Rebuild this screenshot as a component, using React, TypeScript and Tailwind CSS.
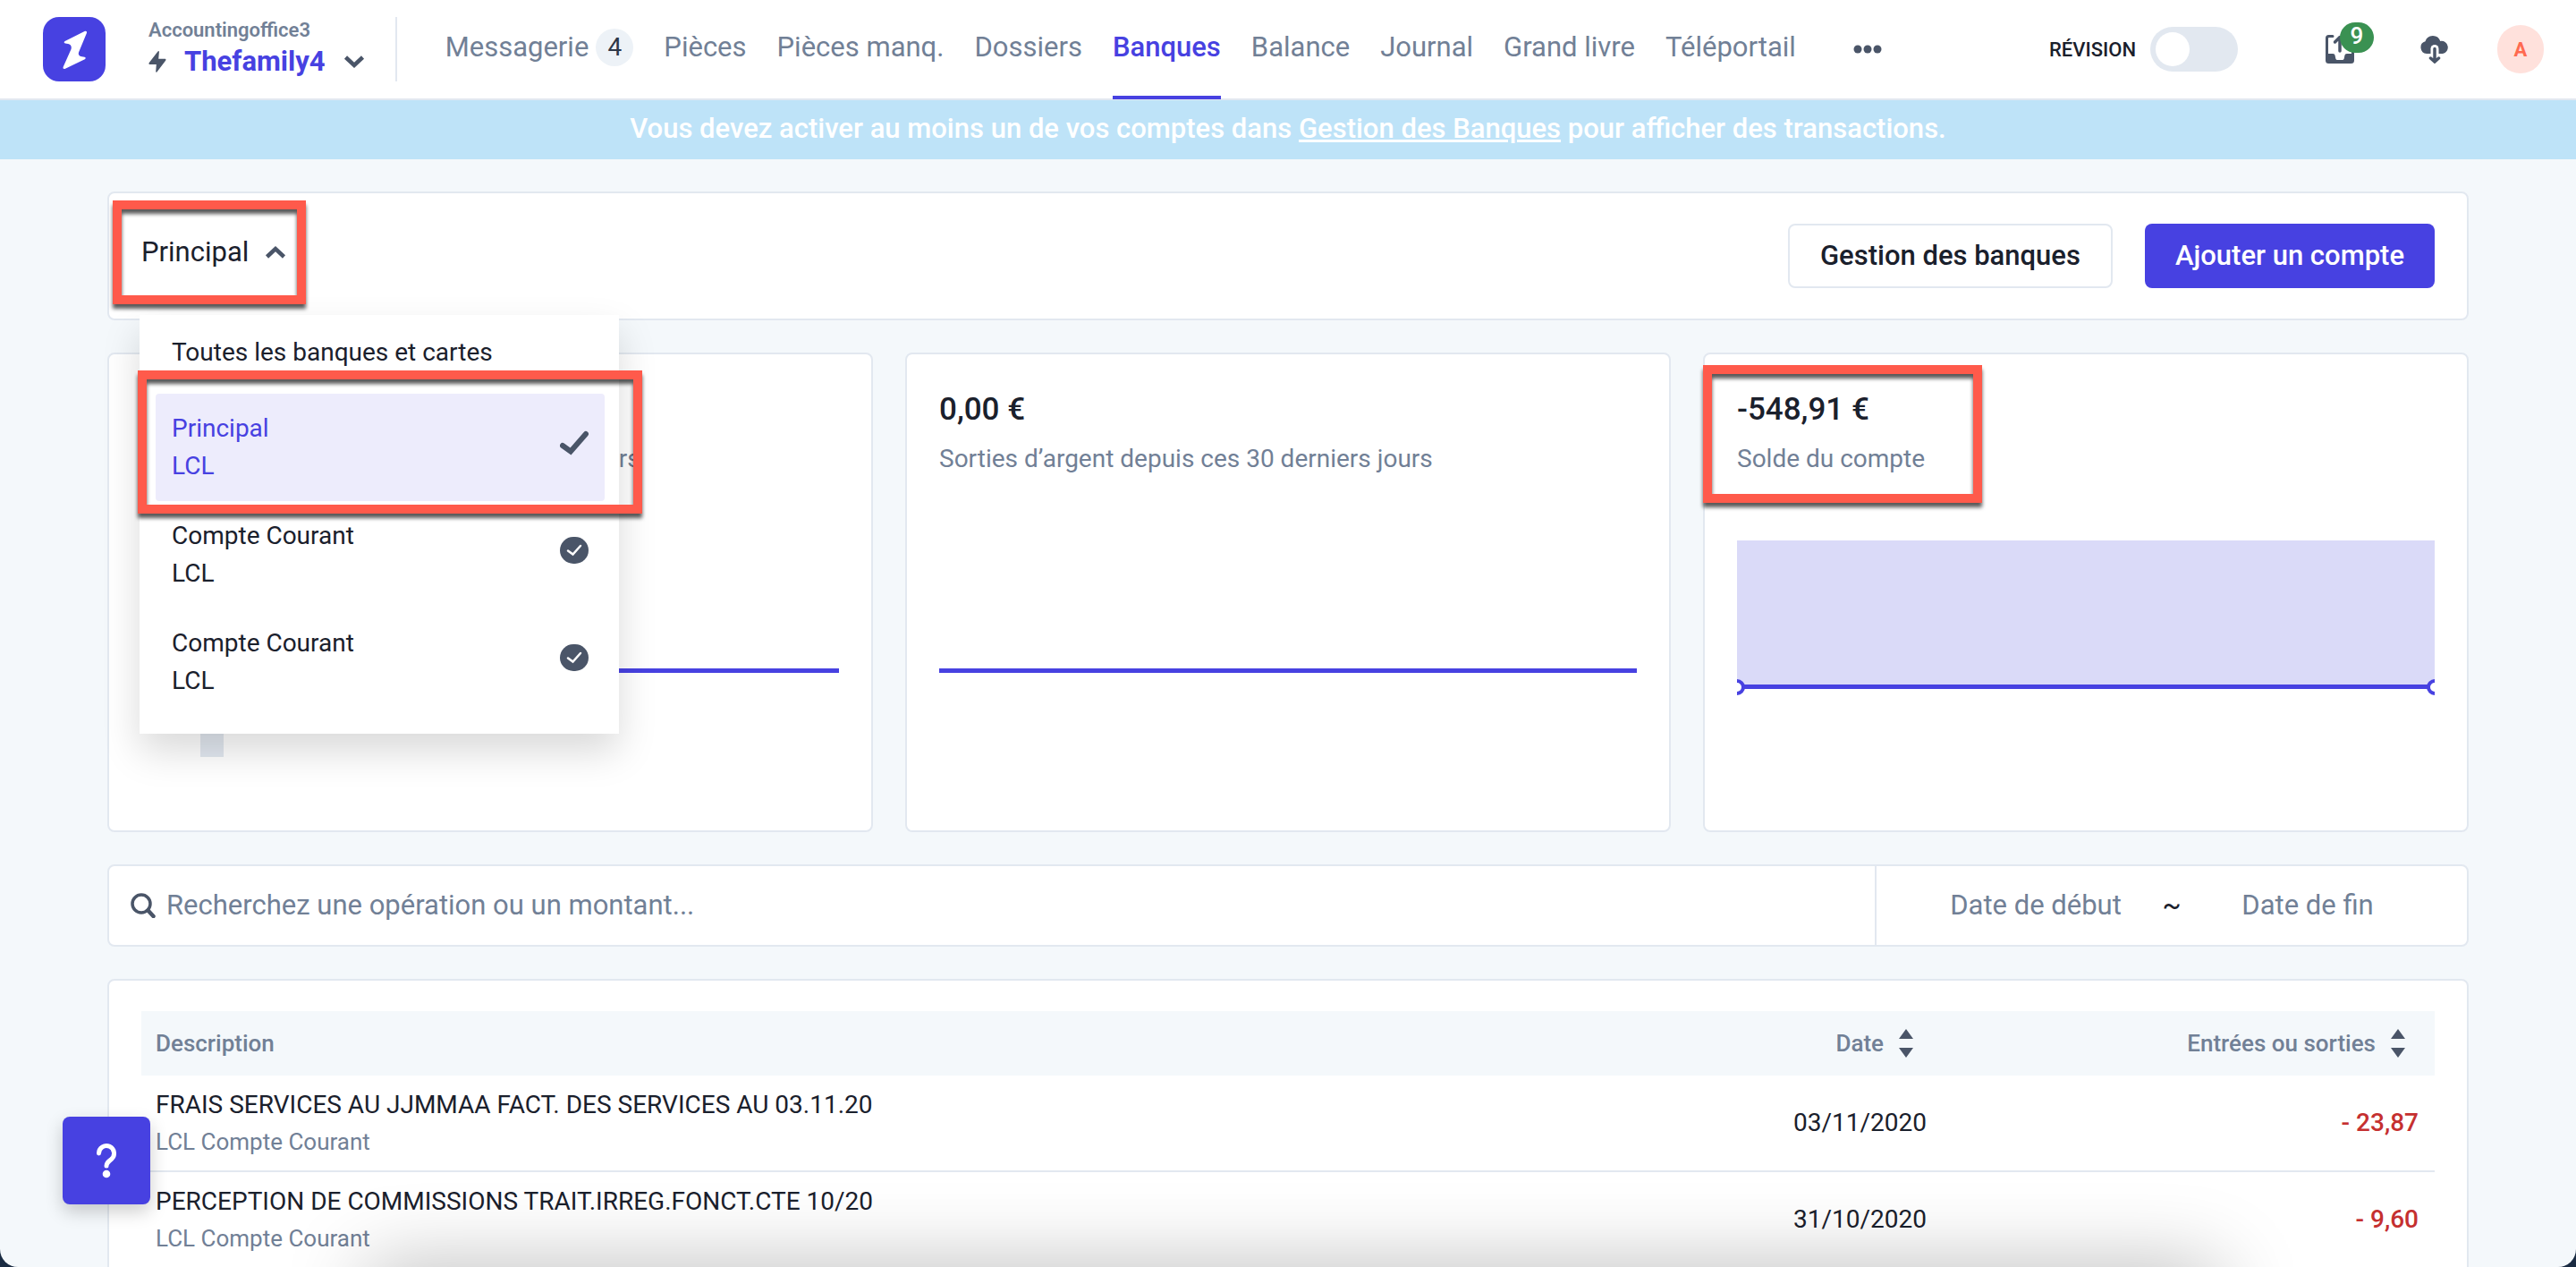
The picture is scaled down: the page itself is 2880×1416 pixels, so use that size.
import type { ReactNode } from "react";
import clsx from "clsx";

const navLinks = [
  { label: "Messagerie", count: 4 },
  { label: "Pièces" },
  { label: "Pièces manq." },
  { label: "Dossiers" },
  { label: "Banques", active: true },
  { label: "Balance" },
  { label: "Journal" },
  { label: "Grand livre" },
  { label: "Téléportail" },
];

const accounts = [
  { name: "Principal", bank: "LCL", selected: true },
  { name: "Compte Courant", bank: "LCL", selected: false },
  { name: "Compte Courant", bank: "LCL", selected: false },
];

const transactions = [
  {
    label: "FRAIS SERVICES AU JJMMAA FACT. DES SERVICES AU 03.11.20",
    account: "LCL Compte Courant",
    date: "03/11/2020",
    amount: "- 23,87",
  },
  {
    label: "PERCEPTION DE COMMISSIONS TRAIT.IRREG.FONCT.CTE 10/20",
    account: "LCL Compte Courant",
    date: "31/10/2020",
    amount: "- 9,60",
  },
];

function Logo() {
  return (
    <svg viewBox="0 0 70 72" className="w-[70px] h-[72px]" aria-hidden="true">
      <rect width="70" height="72" rx="18" fill="#4741e1" />
      <path
        d="M46.5 16c1.800-.7 3 .3 2.400 2L40 39.500c-.8 2.500.8 4.500 3.500 4.800l3 .4c1.600.3 1.700 1.700.3 2.500L25 57.800c-1.800.8-3-.3-2.300-2L31.500 36c1-3-.5-5.500-3.500-6l-3-.5c-1.700-.4-1.800-1.800-.4-2.500z"
        fill="#fff"
      />
    </svg>
  );
}

function BoltIcon() {
  return (
    <svg viewBox="0 0 20 24" className="w-5 h-6" aria-hidden="true">
      <path
        d="M10.500.6C11.200-.3 12 0 11.900 1L11.200 8.800h7c1.300 0 1.600 1 .9 1.900L9.600 23.300c-.7.900-1.500.600-1.400-.4L8.800 15H1.600C.4 15 .1 14 .8 13.100z"
        fill="#4a5568"
      />
    </svg>
  );
}

function Chevron({ up }: { up?: boolean }) {
  return (
    <svg viewBox="0 0 24 16" className={clsx("w-6 h-4", up && "rotate-180")} aria-hidden="true">
      <path d="M2.500 3 L12 12 L21.500 3" fill="none" stroke="#4a5568" strokeWidth="4.500" />
    </svg>
  );
}

function DotsIcon() {
  return (
    <svg viewBox="0 0 32 10" className="w-8 h-[10px]" aria-hidden="true">
      <circle cx="5" cy="5" r="4.500" fill="#4a5568" />
      <circle cx="16" cy="5" r="4.500" fill="#4a5568" />
      <circle cx="27" cy="5" r="4.500" fill="#4a5568" />
    </svg>
  );
}

function OutboxIcon() {
  return (
    <svg viewBox="0 0 32 32" className="w-8 h-8" aria-hidden="true">
      <path
        d="M8 0a1.500 1.500 0 0 1 0 3H4a1 1 0 0 0-1 1v17h5c2 0 2.500 1 2.800 3l.4 2c.3 1.500 1 2 2.200 2h5.200c1.200 0 1.900-.5 2.200-2l.4-2c.3-2 .8-3 2.800-3h5V4a1 1 0 0 0-1-1h-4a1.500 1.500 0 0 1 0-3h4.500A3.500 3.500 0 0 1 32 3.500v25a3.500 3.500 0 0 1-3.500 3.500h-25A3.500 3.500 0 0 1 0 28.500v-25A3.500 3.500 0 0 1 3.500 0z"
        fill="#4a5568"
      />
      <path
        d="M16 18V4M10.500 8 L16 2.500 L21.500 8"
        fill="none"
        stroke="#4a5568"
        strokeWidth="3.500"
        strokeLinecap="round"
        strokeLinejoin="round"
      />
    </svg>
  );
}

function CloudDownloadIcon() {
  return (
    <svg viewBox="0 0 32 32" className="w-8 h-8" aria-hidden="true">
      <path
        d="M7 21a7 7 0 0 1-1.500-13.700A8.800 8.800 0 0 1 22.300 7 7 7 0 0 1 25 21z"
        fill="#4a5568"
      />
      <path d="M16 22V15.500" stroke="#fff" strokeWidth="9" strokeLinecap="round" />
      <path
        d="M16 15.500V29M11.500 26 L16 30 L20.500 26"
        fill="none"
        stroke="#4a5568"
        strokeWidth="3.500"
        strokeLinecap="round"
      />
    </svg>
  );
}

function CheckIcon() {
  return (
    <svg viewBox="0 0 32 28" className="w-8 h-7" aria-hidden="true">
      <path
        d="M3 17 L12 23.500 L29 4"
        fill="none"
        stroke="#4a5568"
        strokeWidth="6"
        strokeLinecap="round"
      />
    </svg>
  );
}

function CheckCircleIcon() {
  return (
    <svg viewBox="0 0 32 30" className="w-8 h-[30px]" aria-hidden="true">
      <rect width="32" height="30" rx="15" fill="#4a5568" />
      <path
        d="M9 15.500 L14.500 19.500 L23 10"
        fill="none"
        stroke="#fff"
        strokeWidth="2.500"
        strokeLinecap="round"
      />
    </svg>
  );
}

function SearchIcon() {
  return (
    <svg viewBox="0 0 28 28" className="w-7 h-7" aria-hidden="true">
      <circle cx="12" cy="12" r="10" fill="none" stroke="#4a5568" strokeWidth="3.500" />
      <path d="M19.500 19.500 L25.500 26" stroke="#4a5568" strokeWidth="4.500" strokeLinecap="round" />
    </svg>
  );
}

function SortIcon() {
  return (
    <svg viewBox="0 0 18 32" className="w-[18px] h-8" aria-hidden="true">
      <path d="M9 0 L17 11 H1z M1 21 H17 L9 32z" fill="#4a5568" />
    </svg>
  );
}

// Red frame used to point at an element of the page
function Highlight({ className }: { className: string }) {
  return (
    <span
      className={clsx(
        "absolute z-30 pointer-events-none border-[10px] border-[#ff5a4b] drop-shadow-[0_5px_2px_rgba(0,0,0,0.65)]",
        className
      )}
    />
  );
}

function StatCard({
  amount,
  label,
  highlight,
  children,
}: {
  amount: string;
  label: string;
  highlight?: boolean;
  children: ReactNode;
}) {
  return (
    <section className="relative bg-white border-2 border-[#e2e8f0] rounded-lg p-9">
      {highlight && <Highlight className="-left-0.5 top-3 w-[312px] h-[154px]" />}
      <p className="text-[35px] leading-[52px] font-medium">{amount}</p>
      <p className="mt-2.5 text-[28px] leading-[38px] text-[#718096]">{label}</p>
      <svg className="block w-full h-[360px]" aria-hidden="true">
        {children}
      </svg>
    </section>
  );
}

function Header() {
  return (
    <header className="h-28 flex items-center bg-white border-b-2 border-[#e2e8f0] pl-12 pr-9">
      <a href="#accueil" aria-label="Accueil">
        <Logo />
      </a>
      <button type="button" className="ml-12 text-left">
        <span className="block text-[22px] leading-7 font-semibold text-[#718096]">
          Accountingoffice3
        </span>
        <span className="flex items-center text-[31px] leading-[42px] font-bold text-[#4741e1]">
          <BoltIcon />
          <span className="ml-5 mr-5">Thefamily4</span>
          <Chevron />
        </span>
      </button>
      <div className="w-0.5 h-[72px] ml-[34px] mr-[54px] bg-[#e2e8f0]" />

      <nav className="flex gap-[34px] text-[31px] text-[#718096]">
        {navLinks.map((link) => (
          <a
            key={link.label}
            href="#"
            className={clsx(
              "h-28 flex items-center gap-2 border-b-4 whitespace-nowrap",
              link.active
                ? "border-[#4741e1] text-[#4741e1] font-medium"
                : "border-transparent"
            )}
          >
            {link.label}
            {link.count && (
              <span className="w-[42px] h-[42px] rounded-full bg-[#edf2f7] text-[#2d3748] text-[28px] flex items-center justify-center">
                {link.count}
              </span>
            )}
          </a>
        ))}
      </nav>
      <button type="button" className="ml-16" aria-label="Plus">
        <DotsIcon />
      </button>

      <div className="ml-auto flex items-center">
        <label className="flex items-center gap-4 text-[22px] font-medium">
          RÉVISION
          <input type="checkbox" className="sr-only" />
          <span className="w-[98px] h-[50px] rounded-full bg-[#e2e8f0] p-1.5">
            <span className="block w-[38px] h-[38px] rounded-full bg-white" />
          </span>
        </label>
        <button type="button" className="relative ml-[98px]" aria-label="Exports">
          <OutboxIcon />
          <span className="absolute left-4 -top-3.5 w-[38px] h-[34px] rounded-full bg-[#3a9152] text-white text-[26px] leading-[30px] font-medium">
            9
          </span>
        </button>
        <button type="button" className="ml-[74px]" aria-label="Téléchargements">
          <CloudDownloadIcon />
        </button>
        <button
          type="button"
          className="ml-[54px] w-[52px] h-[54px] rounded-full bg-[#ffe1dc] text-[#ff6a50] text-[22px] font-bold"
        >
          A
        </button>
      </div>
    </header>
  );
}

function AccountMenu() {
  return (
    <ul className="absolute z-20 left-[34px] top-[136px] w-[536px] pb-5 pl-[18px] pr-4 bg-white text-[28px] leading-[42px] shadow-[0_20px_40px_rgba(0,0,0,0.15)]">
      <li className="mb-1">
        <button type="button" className="w-full h-21 px-[18px] text-left">
          Toutes les banques et cartes
        </button>
      </li>
      {accounts.map((account, i) => (
        <li key={i} className="relative">
          {account.selected && (
            <Highlight className="-left-5 -right-[42px] -top-[26px] -bottom-3.5" />
          )}
          <button
            type="button"
            className={clsx(
              "w-full h-30 px-[18px] flex items-center justify-between rounded text-left",
              account.selected && "bg-[#edecfc] text-[#4741e1]"
            )}
          >
            <span>
              <span className="block">{account.name}</span>
              <span className="block">{account.bank}</span>
            </span>
            <span className="pb-2.5">
              {account.selected ? <CheckIcon /> : <CheckCircleIcon />}
            </span>
          </button>
        </li>
      ))}
    </ul>
  );
}

function Toolbar() {
  return (
    <section className="relative h-36 flex items-center bg-white border-2 border-[#e2e8f0] rounded-lg px-9">
      <div className="relative mb-2">
        <button
          type="button"
          aria-expanded="true"
          className="flex items-center gap-[18px] text-[31px] leading-11"
        >
          Principal
          <Chevron up />
        </button>
        <Highlight className="-left-8 -right-[22px] -inset-y-9" />
      </div>
      <AccountMenu />
      <div className="ml-auto flex gap-9 text-[31px] font-medium">
        <button type="button" className="h-18 px-[34px] border-2 border-[#e2e8f0] rounded-lg">
          Gestion des banques
        </button>
        <button type="button" className="h-18 px-[34px] rounded-lg bg-[#4741e1] text-white">
          Ajouter un compte
        </button>
      </div>
    </section>
  );
}

function SearchBar() {
  return (
    <section className="h-23 flex bg-white border-2 border-[#e2e8f0] rounded-lg text-[31px]">
      <label className="flex-1 flex items-center gap-3 pl-6">
        <SearchIcon />
        <input
          type="text"
          aria-label="Recherche"
          placeholder="Recherchez une opération ou un montant..."
          className="flex-1 outline-none placeholder:text-[#718096]"
        />
      </label>
      <div className="w-[662px] flex items-center justify-center border-l-2 border-[#e2e8f0]">
        <input
          type="text"
          aria-label="Date de début"
          placeholder="Date de début"
          className="w-60 text-center outline-none placeholder:text-[#718096]"
        />
        <span className="w-16 text-center">~</span>
        <input
          type="text"
          aria-label="Date de fin"
          placeholder="Date de fin"
          className="w-60 text-center outline-none placeholder:text-[#718096]"
        />
      </div>
    </section>
  );
}

function Transactions() {
  return (
    <section className="bg-white border-2 border-[#e2e8f0] rounded-lg px-9 pt-[34px] pb-9">
      <table className="w-full border-collapse">
        <thead>
          <tr className="h-18 bg-[#f4f8fb] text-[26px] text-[#718096]">
            <th className="px-4 text-left font-medium">Description</th>
            <th className="w-[550px] px-[18px] font-medium">
              <button type="button" className="ml-auto mr-3.5 flex items-center gap-4">
                Date
                <SortIcon />
              </button>
            </th>
            <th className="w-[550px] px-[18px] font-medium">
              <button type="button" className="ml-auto mr-3.5 flex items-center gap-4">
                Entrées ou sorties
                <SortIcon />
              </button>
            </th>
          </tr>
        </thead>
        <tbody>
          {transactions.map((t) => (
            <tr key={t.label} className="border-b-2 border-[#e2e8f0] text-[28px]">
              <td className="px-4 py-3">
                <div className="leading-[42px]">{t.label}</div>
                <div className="text-[26px] leading-10 text-[#718096]">{t.account}</div>
              </td>
              <td className="px-[18px] text-right">{t.date}</td>
              <td className="px-[18px] text-right font-medium text-[#c53030]">{t.amount}</td>
            </tr>
          ))}
        </tbody>
      </table>
    </section>
  );
}

export default function App() {
  return (
    <div className="h-screen bg-[#1a2b42]">
      <div className="relative h-full overflow-hidden rounded-b-[20px] bg-[#f4f8fb] text-[#1a202c] font-['Roboto',sans-serif]">
        <Header />
        <div className="h-[66px] pb-0.5 flex items-center justify-center bg-[#bee3f8] text-white text-[31px] font-medium">
          <p>
            Vous devez activer au moins un de vos comptes dans{" "}
            <a href="#gestion" className="underline">
              Gestion des Banques
            </a>{" "}
            pour afficher des transactions.
          </p>
        </div>

        <main className="px-30 pt-9 flex flex-col gap-9">
          <Toolbar />
          <div className="grid grid-cols-3 gap-9">
            <StatCard amount="0,00 €" label="Entrées d’argent depuis ces 30 derniers jours">
              <rect y="215" width="100%" height="5" fill="#4741e1" />
              <rect x="66" y="288" width="26" height="26" fill="#e2e8f0" />
            </StatCard>
            <StatCard amount="0,00 €" label="Sorties d’argent depuis ces 30 derniers jours">
              <rect y="215" width="100%" height="5" fill="#4741e1" />
            </StatCard>
            <StatCard amount="-548,91 €" label="Solde du compte" highlight>
              <rect y="72" width="100%" height="163" fill="#dadaf8" />
              <rect y="233" width="100%" height="5" fill="#4741e1" />
              <circle cx="0" cy="236" r="7" fill="#fff" stroke="#4741e1" strokeWidth="4" />
              <circle cx="100%" cy="236" r="7" fill="#fff" stroke="#4741e1" strokeWidth="4" />
            </StatCard>
          </div>
          <SearchBar />
          <Transactions />
        </main>

        <div className="absolute left-[410px] right-[400px] top-full h-20 shadow-[0_0_90px_rgba(0,0,0,0.28)]" />

        <button
          type="button"
          aria-label="Aide"
          className="absolute left-[70px] bottom-[70px] w-[98px] h-[98px] flex items-center justify-center rounded-lg bg-[#4741e1] shadow-[0_8px_20px_rgba(0,0,0,0.2)]"
        >
          <svg viewBox="0 0 24 40" className="w-6 h-10" aria-hidden="true">
            <path
              d="M3.500 12a8.500 8.500 0 1 1 14 6.500c-3.500 2.800-5.500 4.500-5.500 7.500"
              fill="none"
              stroke="#fff"
              strokeWidth="5"
              strokeLinecap="round"
            />
            <circle cx="12" cy="35" r="4.300" fill="#fff" />
          </svg>
        </button>
      </div>
    </div>
  );
}
